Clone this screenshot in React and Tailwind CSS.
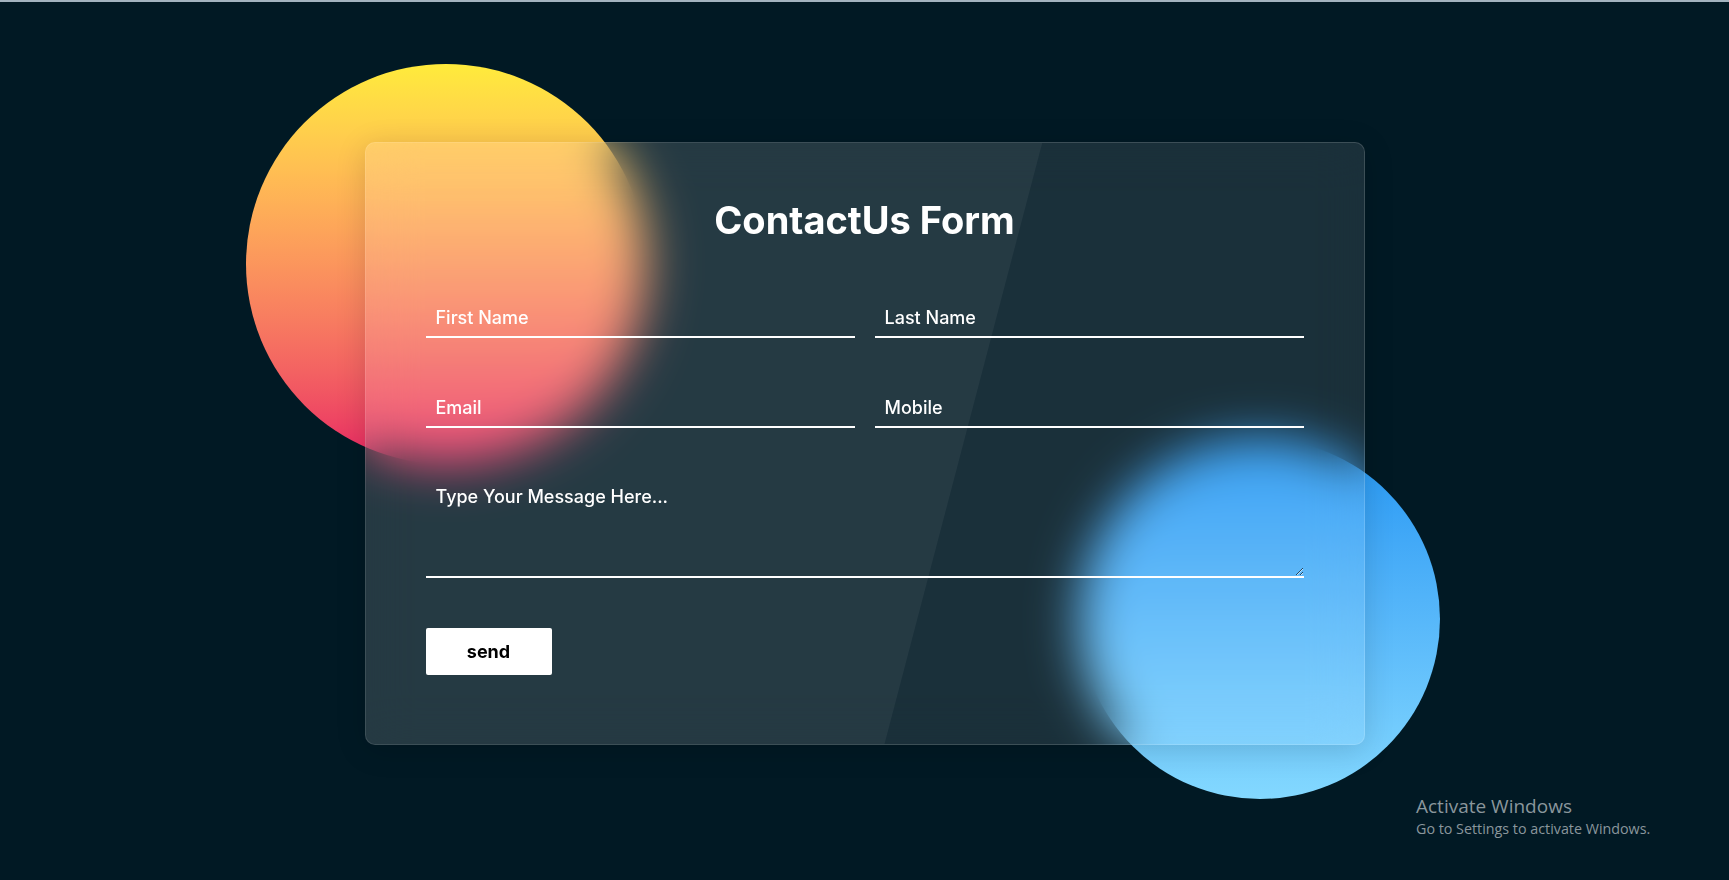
export default function App() {
  return (
    <div className="relative h-[880px] w-full overflow-hidden border-t-2 border-[#a3b3bf] bg-[#011924] font-['Inter',sans-serif]">
      <div className="flex justify-center pt-[140px]">
        <div className="relative w-[1000px]">
          {/* background circles */}
          <div className="absolute left-[-119px] top-[-78px] h-[400px] w-[400px] rounded-full bg-gradient-to-b from-[#ffeb3b] to-[#e91e63]" />
          <div className="absolute right-[-75px] bottom-[-54px] h-[360px] w-[360px] rounded-full bg-gradient-to-b from-[#2196f3] to-[#83d8ff]" />

          {/* glass card */}
          <div className="relative overflow-hidden rounded-[10px] border border-white/15 bg-white/10 backdrop-blur-[25px] shadow-[0_5px_30px_rgba(0,0,0,0.15)]">
            <div className="absolute inset-0 bg-white/5 [clip-path:polygon(0_0,67.8%_0,52%_100%,0_100%)]" />

            <form className="relative px-[60px] pt-[54px] pb-[69px]">
              <h2 className="text-center text-[38px] leading-[46px] font-bold text-white">
                ContactUs Form
              </h2>

              <div className="mt-[55px] grid grid-cols-2 gap-x-5 gap-y-[50px]">
                <input
                  type="text"
                  placeholder="First Name"
                  className="h-10 w-full border-b-2 border-white bg-transparent px-[10px] text-[18px] font-medium text-white outline-none placeholder:text-white"
                />
                <input
                  type="text"
                  placeholder="Last Name"
                  className="h-10 w-full border-b-2 border-white bg-transparent px-[10px] text-[18px] font-medium text-white outline-none placeholder:text-white"
                />
                <input
                  type="email"
                  placeholder="Email"
                  className="h-10 w-full border-b-2 border-white bg-transparent px-[10px] text-[18px] font-medium text-white outline-none placeholder:text-white"
                />
                <input
                  type="text"
                  placeholder="Mobile"
                  className="h-10 w-full border-b-2 border-white bg-transparent px-[10px] text-[18px] font-medium text-white outline-none placeholder:text-white"
                />
              </div>

              <textarea
                placeholder="Type Your Message Here..."
                className="mt-[50px] block h-[100px] w-full border-b-2 border-white bg-transparent px-[10px] pt-[8px] text-[18px] leading-[22px] font-medium text-white outline-none placeholder:text-white"
              />

              <button
                type="button"
                className="mt-[50px] block h-[47px] w-[126px] rounded-[2px] bg-white text-[18px] font-bold text-black"
              >
                send
              </button>
            </form>
          </div>
        </div>
      </div>

      <div className="absolute left-[1416px] top-[792px] font-['Open_Sans',sans-serif] text-[#8a969c]">
        <p className="text-[19px] leading-[25px]">Activate Windows</p>
        <p className="text-[14.3px] leading-[20px]">Go to Settings to activate Windows.</p>
      </div>
    </div>
  );
}
